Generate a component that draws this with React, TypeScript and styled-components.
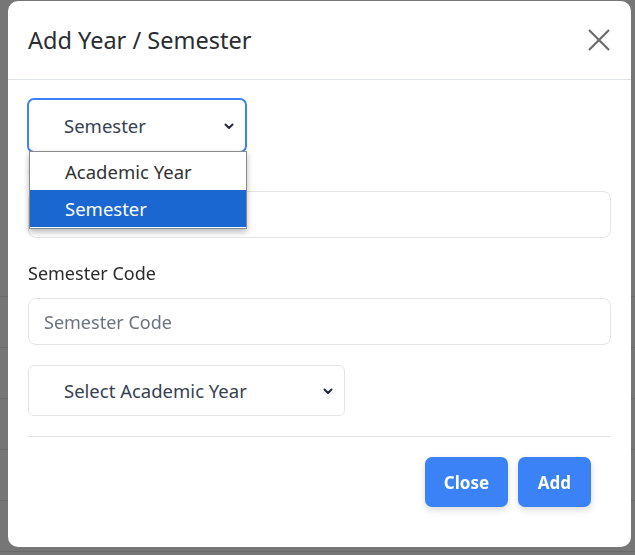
import styled, { createGlobalStyle } from 'styled-components'

const GlobalStyle = createGlobalStyle`
  html, body {
    margin: 0;
    padding: 0;
    background: #767676;
    font-family: 'Noto Sans', 'Open Sans', Arial, sans-serif;
  }
`

const Backdrop = styled.div`
  width: 635px;
  height: 555px;
  overflow: hidden;
  background: #767676;
  padding-top: 246px;
  box-sizing: border-box;
`

const BackRow = styled.div`
  height: 51px;
  border-bottom: 1px solid #6a6a6a;
  box-sizing: border-box;
`

const Modal = styled.div`
  position: fixed;
  left: 8px;
  top: 1px;
  width: 623px;
  height: 546px;
  background: #fff;
  border-radius: 10px;
  display: flex;
  flex-direction: column;
`

const Header = styled.div`
  height: 78px;
  display: flex;
  align-items: center;
  justify-content: space-between;
  padding: 0 20px 0 20px;
  border-bottom: 1px solid #dee2e6;
`

const Title = styled.h5`
  margin: 0;
  font-size: 23.5px;
  font-weight: 400;
  color: #2a2d31;
`

const CloseX = styled.button`
  border: 0;
  background: none;
  padding: 0;
  width: 24px;
  height: 24px;
  display: flex;
  align-items: center;
  justify-content: center;
  cursor: pointer;
`

const Body = styled.div`
  padding: 18px 20px 0 20px;
  display: flex;
  flex-direction: column;
`

const SelectWrap = styled.div`
  position: relative;
  align-self: flex-start;
`

const SelectBox = styled.div<{ $width: number; $height: number; $focus?: boolean }>`
  width: ${p => p.$width}px;
  height: ${p => p.$height}px;
  box-sizing: border-box;
  border: ${p => (p.$focus ? '2px solid #3b82f6' : '1px solid #e2e4e8')};
  margin-left: ${p => (p.$focus ? '-1px' : '0')};
  border-radius: ${p => (p.$focus ? '7px' : '6px')};
  display: flex;
  align-items: center;
  padding: 0 10px 0 35px;
  font-size: 18.5px;
  color: #374151;
  background: #fff;
`

const SelectText = styled.span`
  flex: 1;
`

const OptionList = styled.ul`
  position: absolute;
  left: 1px;
  top: 53px;
  width: 216px;
  margin: 0;
  padding: 1px 0;
  list-style: none;
  background: #fff;
  border: 1px solid #8a8a8a;
  box-shadow: 0 3px 6px rgba(0, 0, 0, 0.28);
  z-index: 2;
`

const Option = styled.li<{ $active?: boolean }>`
  height: 37px;
  display: flex;
  align-items: center;
  padding-left: 35px;
  font-size: 18.5px;
  color: ${p => (p.$active ? '#fff' : '#333')};
  background: ${p => (p.$active ? '#1a67d2' : '#fff')};
`

const Group = styled.div<{ $top: number }>`
  margin-top: ${p => p.$top}px;
  display: flex;
  flex-direction: column;
`

const Label = styled.label`
  font-size: 18px;
  line-height: 27px;
  color: #2b2b2b;
  margin-bottom: 11px;
`

const Input = styled.input`
  height: 47px;
  box-sizing: border-box;
  border: 1px solid #e2e4e8;
  border-radius: 8px;
  padding: 0 15px;
  font-family: inherit;
  font-size: 18px;
  color: #374151;
  outline: none;
  &::placeholder {
    color: #6b7280;
  }
`

const Divider = styled.hr`
  margin: 20px 0 0 0;
  border: 0;
  border-top: 1px solid #e2e4e8;
`

const Footer = styled.div`
  display: flex;
  justify-content: flex-end;
  gap: 10px;
  padding: 20px 40px 0 0;
`

const Button = styled.button<{ $width: number }>`
  width: ${p => p.$width}px;
  height: 50px;
  padding: 0;
  border: 0;
  border-radius: 7px;
  background: #3b82f6;
  color: #fff;
  font-family: inherit;
  font-size: 17px;
  font-weight: 700;
  box-shadow: 0 3px 7px rgba(0, 0, 0, 0.15);
  cursor: pointer;
`

const Chevron = () => (
  <svg width="12" height="12" viewBox="0 0 12 12">
    <path d="M2.5 4.5l3.5 3.5 3.5-3.5" fill="none" stroke="#1f2937" strokeWidth="2" strokeLinecap="round" strokeLinejoin="round" />
  </svg>
)

export default function App() {
  return (
    <>
      <GlobalStyle />
      <Backdrop>
        {[0, 1, 2, 3, 4, 5].map(i => (
          <BackRow key={i} />
        ))}
      </Backdrop>
      <Modal>
        <Header>
          <Title>Add Year / Semester</Title>
          <CloseX aria-label="Close">
            <svg width="22" height="22" viewBox="0 0 22 22">
              <path d="M1 1l20 20M21 1L1 21" stroke="#6b6b6b" strokeWidth="2.2" />
            </svg>
          </CloseX>
        </Header>
        <Body>
          <SelectWrap>
            <SelectBox $width={220} $height={55} $focus>
              <SelectText>Semester</SelectText>
              <Chevron />
            </SelectBox>
            <OptionList>
              <Option>Academic Year</Option>
              <Option $active>Semester</Option>
            </OptionList>
          </SelectWrap>
          <Group $top={0}>
            <Label>Semester Name</Label>
            <Input placeholder="Semester Name" />
          </Group>
          <Group $top={22}>
            <Label>Semester Code</Label>
            <Input placeholder="Semester Code" />
          </Group>
          <Group $top={20}>
            <SelectBox $width={317} $height={51}>
              <SelectText>Select Academic Year</SelectText>
              <Chevron />
            </SelectBox>
          </Group>
          <Divider />
        </Body>
        <Footer>
          <Button $width={83}>Close</Button>
          <Button $width={73}>Add</Button>
        </Footer>
      </Modal>
    </>
  )
}
